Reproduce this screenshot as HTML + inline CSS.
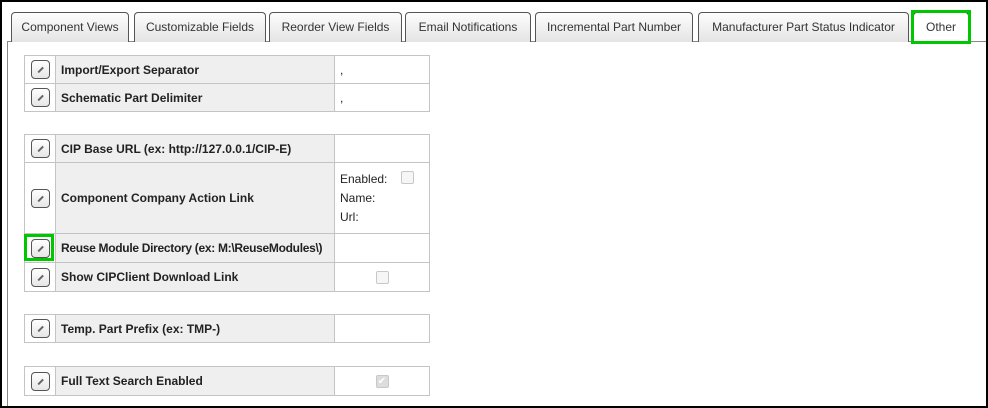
<!DOCTYPE html>
<html><head><style>
*{margin:0;padding:0;box-sizing:border-box}
body{width:988px;height:408px;background:#fff;position:relative;overflow:hidden;font-family:"Liberation Sans",sans-serif;font-size:12px;color:#222}
.frame{position:absolute;left:0;top:0;width:988px;height:408px;border:2px solid #000}
.panel{position:absolute;left:7px;top:41px;width:979px;height:365px;border-top:1px solid #888;border-left:1px solid #888}
.tab{position:absolute;top:12px;height:30px;border:1px solid #555;border-bottom:none;border-radius:4px 4px 0 0;background:linear-gradient(#fdfdfd,#e4e4e4);text-align:center;line-height:28px;font-size:12px;color:#333;white-space:nowrap}
.tab.act{background:#fff;height:31px}
.green{position:absolute;border:3px solid #00c800}
table{position:absolute;left:24px;width:406px;border-collapse:collapse;table-layout:fixed}
td{border:1px solid #c4c4c4;padding:0;overflow:hidden}
td.i{width:31px;background:#fff;text-align:center}
td.l{width:279px;background:#efefef;padding-left:5px;font-weight:bold;font-size:12px;color:#222;white-space:nowrap}
td.v{background:#fff;padding-left:5px}
.ic{display:inline-block;width:19px;height:19px;border:1px solid #555;border-radius:4px;background:linear-gradient(#fff,#e6e6e6);vertical-align:middle;position:relative}
.ic:after{content:"";position:absolute;left:5px;top:8px;width:7px;height:1.5px;background:#666;transform:rotate(-45deg)}
.cb{display:inline-block;width:13px;height:13px;border:1px solid #c8c8c8;border-radius:2px;background:#f6f6f6;vertical-align:middle}
</style></head><body>
<div class="panel"></div>
<div class="tab" style="left:11px;width:118px">Component Views</div>
<div class="tab" style="left:134px;width:132px">Customizable Fields</div>
<div class="tab" style="left:269px;width:133px">Reorder View Fields</div>
<div class="tab" style="left:405px;width:126px">Email Notifications</div>
<div class="tab" style="left:535px;width:158px">Incremental Part Number</div>
<div class="tab" style="left:698px;width:211px">Manufacturer Part Status Indicator</div>
<div class="tab act" style="left:913px;width:56px">Other</div>
<div class="green" style="left:911px;top:10px;width:60px;height:34px"></div>

<table style="top:55px">
<tr style="height:28px"><td class="i"><span class="ic"></span></td><td class="l">Import/Export Separator</td><td class="v">,</td></tr>
<tr style="height:28px"><td class="i"><span class="ic"></span></td><td class="l">Schematic Part Delimiter</td><td class="v">,</td></tr>
</table>

<table style="top:134px">
<tr style="height:28px"><td class="i"><span class="ic"></span></td><td class="l">CIP Base URL (ex: http://127.0.0.1/CIP-E)</td><td class="v"></td></tr>
<tr style="height:71px"><td class="i"><span class="ic"></span></td><td class="l">Component Company Action Link</td><td class="v" style="line-height:19px;white-space:nowrap">Enabled: <span class="cb" style="margin-left:10px;margin-top:-4px"></span><br>Name:<br>Url:</td></tr>
<tr style="height:29px"><td class="i"><span class="ic"></span></td><td class="l" style="letter-spacing:-0.3px">Reuse Module Directory (ex: M:\ReuseModules\)</td><td class="v"></td></tr>
<tr style="height:29px"><td class="i"><span class="ic"></span></td><td class="l">Show CIPClient Download Link</td><td class="v" style="text-align:center;padding:0"><span class="cb"></span></td></tr>
</table>
<div class="green" style="left:24px;top:234px;width:30px;height:27px"></div>

<table style="top:314px">
<tr style="height:28px"><td class="i"><span class="ic"></span></td><td class="l">Temp. Part Prefix (ex: TMP-)</td><td class="v"></td></tr>
</table>

<table style="top:366px">
<tr style="height:29px"><td class="i"><span class="ic"></span></td><td class="l">Full Text Search Enabled</td><td class="v" style="text-align:center;padding:0"><span class="cb" style="background:#ddd;color:#fff;font-size:10px;line-height:11px;text-align:center">✔</span></td></tr>
</table>
<div class="frame"></div>
</body></html>
